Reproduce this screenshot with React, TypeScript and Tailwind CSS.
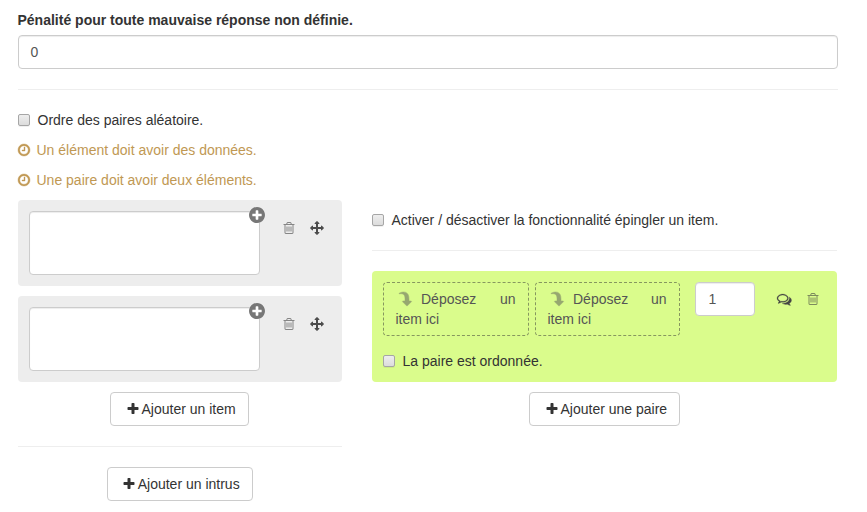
import React from "react";

const PATHS = {
  plus: "M1600 736v192q0 40-28 68t-68 28h-416v416q0 40-28 68t-68 28h-192q-40 0-68-28t-28-68v-416h-416q-40 0-68-28t-28-68v-192q0-40 28-68t68-28h416v-416q0-40 28-68t68-28h192q40 0 68 28t28 68v416h416q40 0 68 28t28 68z",
  plusCircle:
    "M1344 960v-128q0-26-19-45t-45-19h-256v-256q0-26-19-45t-45-19h-128q-26 0-45 19t-19 45v256h-256q-26 0-45 19t-19 45v128q0 26 19 45t45 19h256v256q0 26 19 45t45 19h128q26 0 45-19t19-45v-256h256q26 0 45-19t19-45zm320-64q0 209-103 385.5t-279.5 279.5-385.5 103-385.5-103-279.5-279.5-103-385.5 103-385.5 279.5-279.5 385.5-103 385.5 103 279.5 279.5 103 385.5z",
  clock:
    "M1024 544v448q0 14-9 23t-23 9h-320q-14 0-23-9t-9-23v-64q0-14 9-23t23-9h224v-352q0-14 9-23t23-9h64q14 0 23 9t9 23zm416 352q0-148-73-273t-198-198-273-73-273 73-198 198-73 273 73 273 198 198 273 73 273-73 198-198 73-273zm224 0q0 209-103 385.5t-279.5 279.5-385.5 103-385.5-103-279.5-279.5-103-385.5 103-385.5 279.5-279.5 385.5-103 385.5 103 279.5 279.5 103 385.5z",
  trash:
    "M704 736v576q0 14-9 23t-23 9h-64q-14 0-23-9t-9-23v-576q0-14 9-23t23-9h64q14 0 23 9t9 23zm256 0v576q0 14-9 23t-23 9h-64q-14 0-23-9t-9-23v-576q0-14 9-23t23-9h64q14 0 23 9t9 23zm256 0v576q0 14-9 23t-23 9h-64q-14 0-23-9t-9-23v-576q0-14 9-23t23-9h64q14 0 23 9t9 23zm128 724v-948h-896v948q0 22 7 40.5t14.5 27 10.5 8.5h832q3 0 10.5-8.5t14.5-27 7-40.5zm-672-1076h448l-48-117q-7-9-17-11h-317q-10 2-17 11zm928 32v64q0 14-9 23t-23 9h-96v948q0 83-47 143.5t-113 60.5h-832q-66 0-113-58.5t-47-141.5v-952h-96q-14 0-23-9t-9-23v-64q0-14 9-23t23-9h309l70-167q15-37 54-63t79-26h320q40 0 79 26t54 63l70 167h309q14 0 23 9t9 23z",
  arrows:
    "M1792 896q0 26-19 45l-256 256q-19 19-45 19t-45-19-19-45v-128h-384v384h128q26 0 45 19t19 45-19 45l-256 256q-19 19-45 19t-45-19l-256-256q-19-19-19-45t19-45 45-19h128v-384h-384v128q0 26-19 45t-45 19-45-19l-256-256q-19-19-19-45t19-45l256-256q19-19 45-19t45 19 19 45v128h384v-384h-128q-26 0-45-19t-19-45 19-45l256-256q19-19 45-19t45 19l256 256q19 19 19 45t-19 45-45 19h-128v384h384v-128q0-26 19-45t45-19 45 19l256 256q19 19 19 45z",
  comments:
    "M704 384q-153 0-286 52t-211.5 141-78.5 191q0 82 53 158t149 132l97 56-35 84q34-20 62-39l44-31 53 10q78 14 153 14 153 0 286-52t211.5-141 78.5-191-78.5-191-211.5-141-286-52zm0-128q191 0 353.5 68.5t256.5 186.5 94 257-94 257-256.5 186.5-353.5 68.5q-86 0-176-16-124 88-278 128-36 9-86 16h-3q-11 0-20.5-8t-11.5-21q-1-3-1-6.5t.5-6.5 2-6l2.5-5 3.5-5.5 4-5 4.5-5 4-4.5q5-6 23-25t26-29.5 22.5-29 25-38.5 20.5-44q-124-72-195-177t-71-224q0-139 94-257t256.5-186.5 353.5-68.5zm822 1169q10 24 20.5 44t25 38.5 22.5 29 26 29.5 23 25q1 1 4 4.5t4.5 5 4 5 3.5 5.5l2.5 5 2 6 .5 6.5-1 6.5q-3 14-13 22t-22 7q-50-7-86-16-154-40-278-128-90 16-176 16-271 0-472-132 58 4 88 4 161 0 309-45t264-129q125-92 192-212t67-254q0-77-23-152 129 71 204 178t75 230q0 120-71 224.5t-195 176.5z",
  share:
    "M1792 640q0 26-19 45l-512 512q-19 19-45 19t-45-19-19-45v-256h-224q-98 0-175.5 6t-154 21.5-133 42.5-105.5 69.5-80 101-48.5 138.5-17.5 181q0 55 5 123 0 6 2.5 23.5t2.5 26.5q0 15-8.5 25t-23.5 10q-16 0-28-17-7-9-13-22t-13.5-30-10.5-24q-127-285-127-451 0-199 53-333 162-403 875-403h224v-256q0-26 19-45t45-19 45 19l512 512q19 19 19 45z",
};

function Icon({ name, className = "size-3.5" }: { name: keyof typeof PATHS; className?: string }) {
  return (
    <svg viewBox="0 0 1792 1792" fill="currentColor" className={`shrink-0 overflow-visible ${className}`}>
      <path d={PATHS[name]} />
    </svg>
  );
}

function Check({ label }: { label: string }) {
  return (
    <label className="flex h-5 items-center">
      <input
        type="checkbox"
        className="mr-2 size-3 shrink-0 appearance-none rounded-[2px] border border-[#a6a6a6] bg-linear-to-b from-[#eeeeee] to-[#dcdcdc] shadow-[0_1px_0_rgba(0,0,0,0.06)]"
      />
      {label}
    </label>
  );
}

function Warning({ text }: { text: string }) {
  return (
    <p className="mt-2.5 flex h-5 items-center text-[#c09853]">
      <Icon name="clock" className="mr-[6px] -ml-px size-3.5 stroke-current [stroke-width:50]" />
      {text}
    </p>
  );
}

function ItemCard() {
  return (
    <div className="flex h-[86px] rounded-[4px] bg-[#ededed] p-[11px]">
      <div className="relative h-16 w-[231px]">
        <textarea className="block h-16 w-full resize-none rounded-[4px] border border-[#cccccc] bg-white shadow-[inset_0_1px_1px_rgba(0,0,0,0.075)]" />
        <span className="absolute -top-1 -right-[5.5px] size-4 rounded-full bg-white text-[#777777]">
          <svg viewBox="128 128 1536 1536" fill="currentColor" className="size-4">
            <path d={PATHS.plusCircle} />
          </svg>
        </span>
      </div>
      <Icon name="trash" className="mt-[10px] ml-[22px] size-3.5 text-[#858585]" />
      <Icon name="arrows" className="mt-[10px] ml-[14px] size-3.5 text-[#4c4c4c]" />
    </div>
  );
}

function DropZone({ className }: { className: string }) {
  return (
    <div className={`h-[54px] rounded-[4px] border border-dashed border-[#333333]/50 px-3 py-1.5 text-[#555555] ${className}`}>
      <div className="flex h-5 items-center">
        <Icon name="share" className="mr-[9.5px] ml-[2px] size-3.5 rotate-90 stroke-current opacity-50 [stroke-width:60]" />
        <span>Déposez</span>
        <span className="ml-auto">un</span>
      </div>
      <div>item ici</div>
    </div>
  );
}

function AddButton({ label, className }: { label: string; className: string }) {
  return (
    <button className={`flex h-[34px] items-center rounded-[4px] border border-[#cccccc] bg-white whitespace-nowrap text-[#333333] ${className}`}>
      <Icon name="plus" className="mr-[2px] size-3.5" />
      {label}
    </button>
  );
}

export default function App() {
  return (
    <main className="h-[512px] w-[867px] overflow-hidden bg-white pt-2.5 pl-[17.5px] font-['Liberation_Sans',Arial,sans-serif] text-[14px] leading-5 text-[#333333]">
      <label className="block h-[25px] font-bold">Pénalité pour toute mauvaise réponse non définie.</label>
      <input
        defaultValue="0"
        className="block h-[34px] w-[820px] rounded-[4px] border border-[#cccccc] px-[11.9px] text-[#555555] shadow-[inset_0_1px_1px_rgba(0,0,0,0.075)]"
      />
      <hr className="mt-5 mb-5 w-[820px] border-[#eeeeee]" />
      <Check label="Ordre des paires aléatoire." />
      <Warning text="Un élément doit avoir des données." />
      <Warning text="Une paire doit avoir deux éléments." />

      <div className="mt-2.5 flex gap-[30px]">
        <section className="flex w-[324px] flex-col">
          <div className="flex flex-col gap-2.5">
            <ItemCard />
            <ItemCard />
          </div>
          <AddButton label="Ajouter un item" className="mt-2.5 ml-[92px] w-[139px] pl-[15px]" />
          <hr className="my-5 border-[#eeeeee]" />
          <AddButton label="Ajouter un intrus" className="ml-[89px] w-[146px] pl-[14.2px]" />
        </section>

        <section className="flex w-[465px] flex-col pt-2.5">
          <Check label="Activer / désactiver la fonctionnalité épingler un item." />
          <hr className="my-5 border-[#eeeeee]" />
          <div className="h-[111px] rounded-[4px] bg-[#dafc8c] p-[11px]">
            <div className="flex">
              <DropZone className="w-[146px]" />
              <DropZone className="ml-[6px] w-[145px]" />
              <input
                defaultValue="1"
                className="ml-[15px] block h-[34px] w-[60px] rounded-[4px] border border-[#cccccc] bg-white px-[13px] text-[#555555] shadow-[inset_0_1px_1px_rgba(0,0,0,0.075)]"
              />
              <Icon name="comments" className="mt-[9.5px] ml-[22.5px] size-[14.5px] stroke-current text-[#444444] [stroke-width:30]" />
              <Icon name="trash" className="mt-[10px] ml-[14px] size-3.5 text-[#7c8a5d]" />
            </div>
            <div className="mt-[15px]">
              <Check label="La paire est ordonnée." />
            </div>
          </div>
          <AddButton label="Ajouter une paire" className="mt-2.5 ml-[157px] w-[151px] pl-[15px]" />
        </section>
      </div>
    </main>
  );
}
